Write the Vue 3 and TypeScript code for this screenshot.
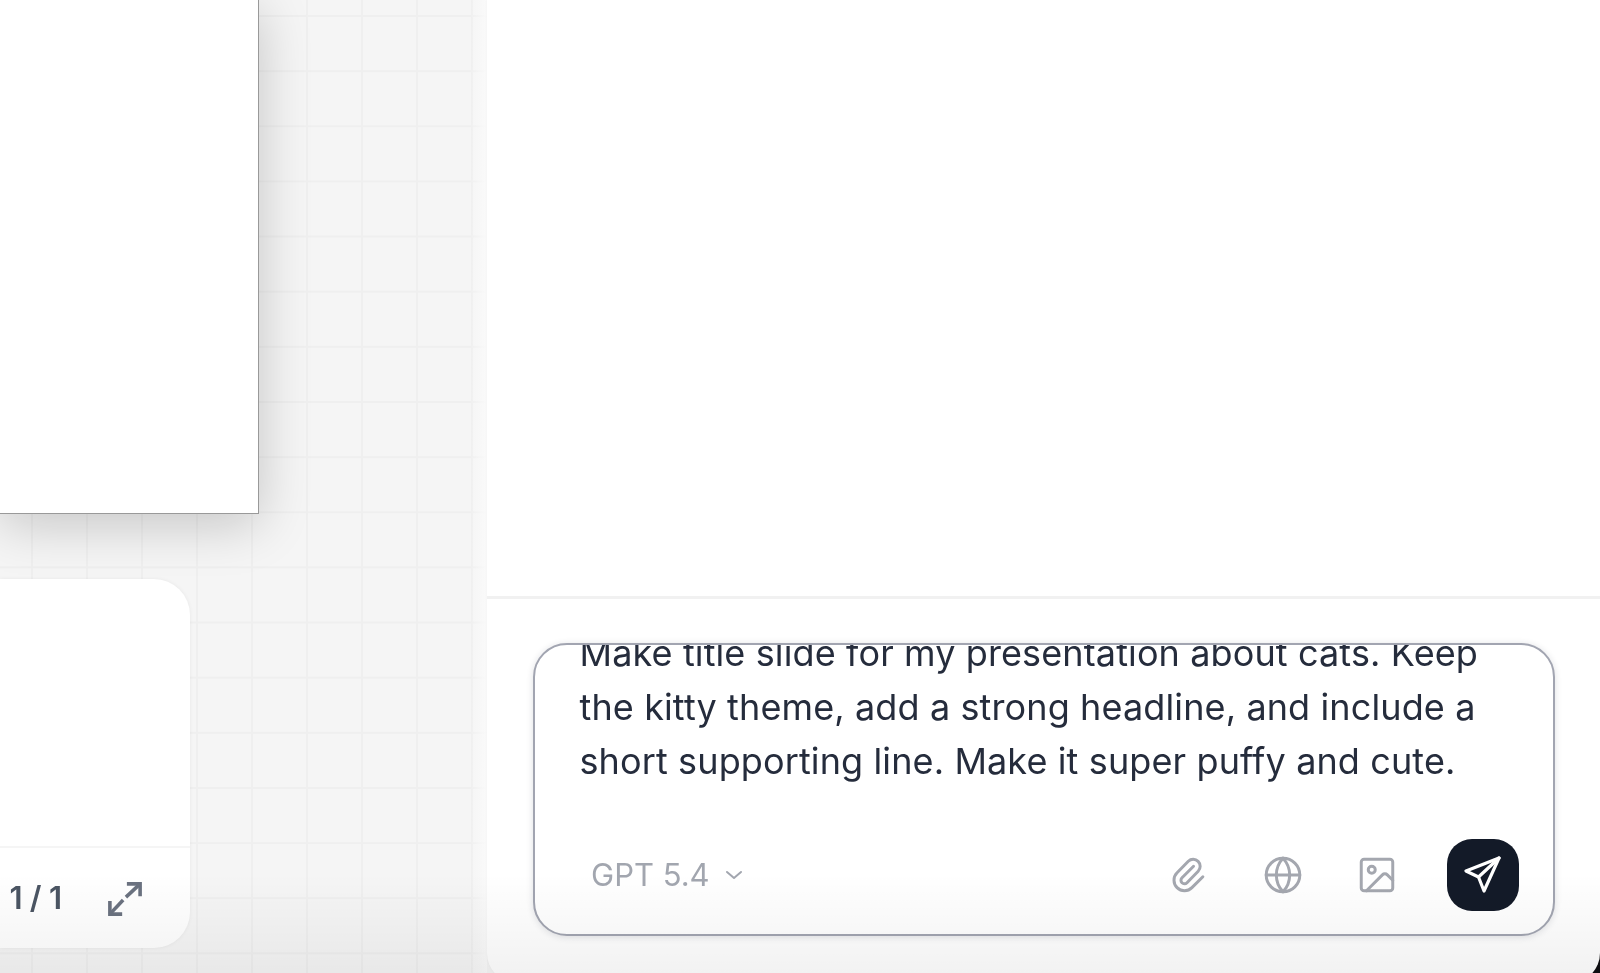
<template>
  <div class="screen">
    <section class="canvas">
      <div class="slide"></div>
      <div class="card">
        <div class="card-body"></div>
        <div class="card-footer">
          <span class="pager">1 / 1</span>
          <svg class="expand" width="34" height="34" viewBox="0 0 36 36" fill="none" stroke="currentColor" stroke-width="3.8">
            <path d="M20 2h14v13" />
            <path d="M34 2 19 16" />
            <path d="M2 20v14h13" />
            <path d="M2 34 16 19" />
          </svg>
        </div>
      </div>
    </section>

    <div class="panel-wrap">
      <aside class="panel">
        <div class="messages"></div>
        <div class="composer">
          <div class="box">
            <div class="prompt">
              <p v-for="line in promptLines" :key="line">{{ line }}</p>
            </div>
            <div class="controls">
              <button class="model">
                GPT 5.4
                <svg width="18" height="10" viewBox="0 0 18 10" fill="none" stroke="currentColor" stroke-width="2" stroke-linecap="round" stroke-linejoin="round">
                  <path d="m2 2 7 6 7-6" />
                </svg>
              </button>
              <div class="tools">
                <svg class="tool clip" width="42" height="42" viewBox="0 0 24 24" fill="none" stroke="currentColor" stroke-width="1.7" stroke-linecap="round" stroke-linejoin="round">
                  <path d="M15.172 7l-6.586 6.586a2 2 0 102.828 2.828l6.414-6.586a4 4 0 00-5.656-5.656l-6.415 6.585a6 6 0 108.486 8.486L20.5 13" />
                </svg>
                <svg class="tool" width="42" height="42" viewBox="0 0 24 24" fill="none" stroke="currentColor" stroke-width="1.7" stroke-linecap="round" stroke-linejoin="round">
                  <circle cx="12" cy="12" r="9.6" />
                  <path d="M12 2.4a14 14 0 0 0 0 19.2 14 14 0 0 0 0-19.2" />
                  <path d="M2.4 12h19.2" />
                </svg>
                <svg class="tool" width="42" height="42" viewBox="0 0 24 24" fill="none" stroke="currentColor" stroke-width="1.7" stroke-linecap="round" stroke-linejoin="round">
                  <rect x="3" y="3" width="18" height="18" rx="1.6" />
                  <circle cx="9" cy="9" r="2" />
                  <path d="m21 15-3.086-3.086a2 2 0 0 0-2.828 0L6 21" />
                </svg>
                <button class="send">
                  <svg width="37" height="37" viewBox="0 0 37 37" fill="none" stroke="#fff" stroke-width="3.2" stroke-linecap="round" stroke-linejoin="round">
                    <path d="M35 2 2 15l12.5 6L20 35Z" />
                    <path d="M35 2 14.5 21" />
                  </svg>
                </button>
              </div>
            </div>
          </div>
        </div>
      </aside>
    </div>

    <div class="bottom-fade"></div>
  </div>
</template>

<script setup lang="ts">
const promptLines: string[] = [
  'Make title slide for my presentation about cats. Keep',
  'the kitty theme, add a strong headline, and include a',
  'short supporting line. Make it super puffy and cute.',
]
</script>

<style>
html,
body {
  margin: 0;
  background: #f5f5f5;
}
</style>

<style scoped>
.screen {
  position: relative;
  display: flex;
  width: 1600px;
  height: 973px;
  overflow: hidden;
  font-family: Inter, "Liberation Sans", sans-serif;
  filter: blur(0.6px);
}

.canvas {
  flex: 0 0 487px;
  display: flex;
  flex-direction: column;
  height: 973px;
  background-color: #f5f5f5;
  background-image:
    linear-gradient(to right, rgba(250, 250, 250, 0) 470px, #fafafa 487px),
    linear-gradient(to right, #efefef 2px, transparent 2px),
    linear-gradient(to bottom, #efefef 2px, transparent 2px);
  background-size: 100% 100%, 55px 100%, 100% 55.15px;
  background-position: 0 0, 31px 0, 0 15px;
}

.slide {
  flex: none;
  box-sizing: border-box;
  width: 259px;
  height: 514px;
  background: #fff;
  border-right: 1px solid #999;
  border-bottom: 1px solid #999;
  box-shadow: 0 10px 50px rgba(0, 0, 0, 0.2);
}

.card {
  flex: none;
  display: flex;
  flex-direction: column;
  box-sizing: border-box;
  width: 190px;
  height: 369px;
  margin-top: 65px;
  background: #fff;
  border-radius: 0 36px 36px 0;
  box-shadow: 0 0 4px rgba(0, 0, 0, 0.06);
}

.card-body {
  flex: 1;
  border-bottom: 2px solid #f5f5f5;
}

.card-footer {
  flex: 0 0 100px;
  display: flex;
  align-items: center;
  justify-content: flex-end;
  gap: 46px;
  padding: 0 48px 0 0;
  color: #6b7280;
}

.pager {
  margin-top: -1px;
  font-size: 31px;
  font-weight: 600;
  color: #4b5563;
  word-spacing: -0.5px;
}

.expand {
  margin-top: 2px;
}

.panel-wrap {
  flex: 1;
  height: 983px;
  background: linear-gradient(to right, #f5f5f5 50%, #0f0f12 50%);
}

.panel {
  display: flex;
  flex-direction: column;
  height: 983px;
  background: #fff;
  border-radius: 0 0 30px 30px;
  box-shadow: 0 0 3px rgba(0, 0, 0, 0.04);
}

.messages {
  flex: 0 0 596px;
}

.composer {
  flex: 1;
  padding: 44px 45px 48px 46px;
  border-top: 3px solid #f1f1f1;
}

.box {
  display: flex;
  flex-direction: column;
  box-sizing: border-box;
  height: 293px;
  background: #fff;
  border: 2.5px solid #a2a5b1;
  border-radius: 34px;
  box-shadow: 0 1px 7px rgba(30, 35, 60, 0.14);
  overflow: hidden;
}

.prompt {
  flex: 1;
  min-height: 0;
  padding: 0 20px 0 44.5px;
  overflow: hidden;
  color: #252c3c;
  font-size: 36px;
  line-height: 54px;
  letter-spacing: 0.12px;
}

.prompt p {
  margin: 0;
  white-space: nowrap;
}

.prompt p:first-child {
  margin-top: -19px;
}

.controls {
  flex: none;
  display: flex;
  align-items: center;
  justify-content: space-between;
  height: 72px;
  padding: 0 34.5px 23.5px 56px;
}

.model {
  display: flex;
  align-items: center;
  gap: 15px;
  padding: 0;
  border: none;
  background: none;
  color: #a2a6af;
  font-family: inherit;
  font-size: 31px;
  font-weight: 400;
}

.tools {
  display: flex;
  align-items: center;
  gap: 52.5px;
  color: #a4a7af;
}

.send {
  display: flex;
  align-items: center;
  justify-content: center;
  box-sizing: border-box;
  width: 72px;
  height: 72px;
  margin-left: -4px;
  padding: 0;
  border: none;
  border-radius: 25px;
  background: #131a28;
}

.bottom-fade {
  position: absolute;
  left: 0;
  right: 0;
  bottom: 0;
  height: 100px;
  background: linear-gradient(to bottom, rgba(0, 0, 0, 0), rgba(0, 0, 0, 0.05));
  pointer-events: none;
}
</style>
